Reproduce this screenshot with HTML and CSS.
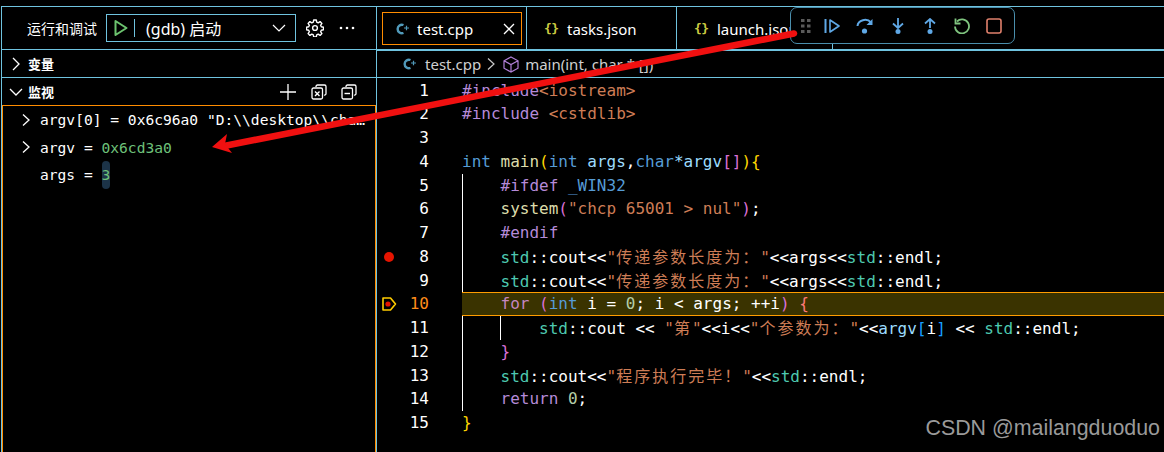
FILE: index.html
```html
<!DOCTYPE html>
<html lang="zh">
<head>
<meta charset="utf-8">
<title>test.cpp</title>
<link rel="stylesheet" href="styles.css">
</head>
<body>
<div class="app">
  <aside class="sidebar">
    <div class="run-bar">
      <span class="run-title">运行和调试</span>
      <div class="run-select">
        <span class="run-play"><svg width="16" height="18" viewBox="0 0 16 18"><path d="M2.5 2 L13.5 9 L2.5 16 Z" fill="none" stroke="#6cc36e" stroke-width="2" stroke-linejoin="round"/></svg></span>
        <span class="run-name">(gdb) 启动</span>
        <svg class="run-caret" width="14" height="8" viewBox="0 0 14 8"><path d="M1 1 L7 7 L13 1" fill="none" stroke="#fff" stroke-width="1.2"/></svg>
      </div>
      <svg class="gear" width="18" height="18" viewBox="0 0 18 18"><path d="M7.7 1 h2.6 l.4 2.2 1.5.7 1.9-1.3 1.8 1.8-1.3 1.9.7 1.5 2.2.4 v2.6 l-2.2.4-.7 1.5 1.3 1.9-1.8 1.8-1.9-1.3-1.5.7-.4 2.2 h-2.6 l-.4-2.2-1.5-.7-1.9 1.3-1.8-1.8 1.3-1.9-.7-1.5-2.2-.4 v-2.6 l2.2-.4.7-1.5-1.3-1.9 1.8-1.8 1.9 1.3 1.5-.7 Z" fill="none" stroke="#fff" stroke-width="1.4" stroke-linejoin="round"/><circle cx="9" cy="9" r="2.4" fill="none" stroke="#fff" stroke-width="1.4"/></svg>
      <svg class="dots" width="16" height="4" viewBox="0 0 16 4"><circle cx="2" cy="2" r="1.3" fill="#fff"/><circle cx="8" cy="2" r="1.3" fill="#fff"/><circle cx="14" cy="2" r="1.3" fill="#fff"/></svg>
    </div>
    <div class="section-head">
      <svg class="chev" width="16" height="16" viewBox="0 0 16 16"><path d="M5 2 L11 8 L5 14" fill="none" stroke="#fff" stroke-width="1.3"/></svg>
      <span>变量</span>
    </div>
    <div class="section-head">
      <svg class="chev" width="16" height="16" viewBox="0 0 16 16"><path d="M2 5 L8 11 L14 5" fill="none" stroke="#fff" stroke-width="1.3"/></svg>
      <span class="grow">监视</span>
      <div class="head-actions">
        <svg width="18" height="18" viewBox="0 0 18 18"><path d="M9 1 V17 M1 9 H17" stroke="#fff" stroke-width="1.3"/></svg>
        <svg width="16" height="16" viewBox="0 0 16 16"><path d="M5 3 V2.500 A1.500 1.500 0 0 1 6.500 1 H13.500 A1.500 1.500 0 0 1 15 2.500 V9.500 A1.500 1.500 0 0 1 13 11" fill="none" stroke="#fff" stroke-width="1.300"/><rect x="1" y="4" width="10.500" height="11" rx="1.500" fill="none" stroke="#fff" stroke-width="1.300"/><path d="M4 7.500 L8.500 12 M8.500 7.500 L4 12" stroke="#fff" stroke-width="1.400"/></svg>
        <svg width="16" height="16" viewBox="0 0 16 16"><path d="M5 3 V2.500 A1.500 1.500 0 0 1 6.500 1 H13.500 A1.500 1.500 0 0 1 15 2.500 V9.500 A1.500 1.500 0 0 1 13 11" fill="none" stroke="#fff" stroke-width="1.300"/><rect x="1" y="4" width="10.500" height="11" rx="1.500" fill="none" stroke="#fff" stroke-width="1.300"/><path d="M3.500 9.500 H9" stroke="#fff" stroke-width="1.400"/></svg>
      </div>
    </div>
    <div class="watch">
      <div class="watch-row"><svg class="tw" width="10" height="14" viewBox="0 0 10 14"><path d="M2 1.500 L8 7 L2 12.500" fill="none" stroke="#fff" stroke-width="1.300"/></svg><span class="watch-text">argv[0] = 0x6c96a0 "D:\\desktop\\char\\test.exe"</span></div>
      <div class="watch-row"><svg class="tw" width="10" height="14" viewBox="0 0 10 14"><path d="M2 1.500 L8 7 L2 12.500" fill="none" stroke="#fff" stroke-width="1.300"/></svg><span class="watch-text">argv = <span class="val">0x6cd3a0</span></span></div>
      <div class="watch-row leaf"><span class="watch-text">args = <span class="val pill">3</span></span></div>
    </div>
  </aside>
  <main class="editor">
    <div class="tabs">
      <div class="tab active"><div class="tab-in"><svg class="cpp-ic" width="14" height="14" viewBox="0 0 14 14"><path d="M8.500 3 A4.300 4.300 0 1 0 8.500 11" fill="none" stroke="#519aba" stroke-width="2.400"/><path d="M9 6 H14 M11.500 3.800 V8.200" stroke="#519aba" stroke-width="1.200"/></svg><span class="tab-name">test.cpp</span><svg class="tab-x" width="12" height="12" viewBox="0 0 12 12"><path d="M1 1 L11 11 M11 1 L1 11" stroke="#fff" stroke-width="1.3"/></svg></div></div>
      <div class="tab"><div class="tab-in"><span class="json-ic">{}</span><span class="tab-name">tasks.json</span></div></div>
      <div class="tab"><div class="tab-in"><span class="json-ic">{}</span><span class="tab-name">launch.json</span></div></div>
    </div>
    <div class="crumbs">
      <svg class="cpp-ic" width="14" height="14" viewBox="0 0 14 14"><path d="M8.500 3 A4.300 4.300 0 1 0 8.500 11" fill="none" stroke="#519aba" stroke-width="2.400"/><path d="M9 6 H14 M11.500 3.800 V8.200" stroke="#519aba" stroke-width="1.200"/></svg><span>test.cpp</span>
      <svg class="crumb-sep" width="10" height="14" viewBox="0 0 10 14"><path d="M2 1.500 L8 7 L2 12.500" fill="none" stroke="#c8c8c8" stroke-width="1.200"/></svg>
      <svg class="crumb-cube" width="16" height="17" viewBox="0 0 16 17"><path d="M8 1 L15 4.800 V12.200 L8 16 L1 12.200 V4.800 Z M1 4.800 L8 8.600 L15 4.800 M8 8.600 V16" fill="none" stroke="#b180d7" stroke-width="1.200"/></svg>
      <span>main(int, char * [])</span>
    </div>
    <div class="code">
      <div class="line"><span class="glyph"></span><span class="num">1</span><span class="src"><span class="pp">#include</span><span class="str">&lt;iostream&gt;</span></span></div>
      <div class="line"><span class="glyph"></span><span class="num">2</span><span class="src"><span class="pp">#include</span> <span class="str">&lt;cstdlib&gt;</span></span></div>
      <div class="line"><span class="glyph"></span><span class="num">3</span><span class="src"></span></div>
      <div class="line"><span class="glyph"></span><span class="num">4</span><span class="src"><span class="kw">int</span> <span class="fn">main</span><span class="b1">(</span><span class="kw">int</span> <span class="var">args</span>,<span class="kw">char</span><span class="var">*argv</span><span class="b2">[]</span><span class="b1">){</span></span></div>
      <div class="line"><span class="glyph"></span><span class="num">5</span><span class="src g1">    <span class="pp">#ifdef</span> <span class="kw">_WIN32</span></span></div>
      <div class="line"><span class="glyph"></span><span class="num">6</span><span class="src g1">    <span class="fn">system</span><span class="b2">(</span><span class="str">"chcp 65001 &gt; nul"</span><span class="b2">)</span>;</span></div>
      <div class="line"><span class="glyph"></span><span class="num">7</span><span class="src g1">    <span class="pp">#endif</span></span></div>
      <div class="line"><span class="glyph"><i class="bp"></i></span><span class="num">8</span><span class="src g1">    <span class="ty">std</span>::cout&lt;&lt;<span class="str">"<span class="cjk">传递参数长度为：</span>"</span>&lt;&lt;args&lt;&lt;<span class="ty">std</span>::endl;</span></div>
      <div class="line"><span class="glyph"></span><span class="num">9</span><span class="src g1">    <span class="ty">std</span>::cout&lt;&lt;<span class="str">"<span class="cjk">传递参数长度为：</span>"</span>&lt;&lt;args&lt;&lt;<span class="ty">std</span>::endl;</span></div>
      <div class="line current"><span class="glyph"><svg width="16" height="16" viewBox="0 0 16 16"><path d="M2 2 H9.500 L14.500 8 L9.500 14 H2 Z" fill="none" stroke="#ffcc00" stroke-width="1.600" stroke-linejoin="round"/><circle cx="7" cy="8" r="2.600" fill="#e51400"/></svg></span><span class="num">10</span><span class="src"><span class="pp">    for</span> <span class="b2">(</span><span class="kw">int</span> i = <span class="lit">0</span>; i &lt; args; ++i<span class="b2">)</span> <span class="b3">{</span></span></div>
      <div class="line"><span class="glyph"></span><span class="num">11</span><span class="src g1 g2">        <span class="ty">std</span>::cout &lt;&lt; <span class="str">"<span class="cjk">第</span>"</span>&lt;&lt;i&lt;&lt;<span class="str">"<span class="cjk">个参数为：</span>"</span>&lt;&lt;<span class="var">argv</span><span class="b4">[</span>i<span class="b4">]</span> &lt;&lt; <span class="ty">std</span>::endl;</span></div>
      <div class="line"><span class="glyph"></span><span class="num">12</span><span class="src g1">    <span class="b2">}</span></span></div>
      <div class="line"><span class="glyph"></span><span class="num">13</span><span class="src g1">    <span class="ty">std</span>::cout&lt;&lt;<span class="str">"<span class="cjk">程序执行完毕！</span>"</span>&lt;&lt;<span class="ty">std</span>::endl;</span></div>
      <div class="line"><span class="glyph"></span><span class="num">14</span><span class="src g1">    <span class="pp">return</span> <span class="lit">0</span>;</span></div>
      <div class="line"><span class="glyph"></span><span class="num">15</span><span class="src"><span class="b1">}</span></span></div>
    </div>
  </main>
</div>

<div class="debug-bar">
  <svg class="grip" width="10" height="14" viewBox="0 0 10 14"><g fill="#5a5a5a"><rect x="0" y="0" width="3.500" height="3"/><rect x="6" y="0" width="3.500" height="3"/><rect x="0" y="5.500" width="3.500" height="3"/><rect x="6" y="5.500" width="3.500" height="3"/><rect x="0" y="11" width="3.500" height="3"/><rect x="6" y="11" width="3.500" height="3"/></g></svg>
  <svg width="16" height="16" viewBox="0 0 16 16"><path d="M1.500 1 V15" stroke="#5fa8e6" stroke-width="2"/><path d="M6 2 L15 8 L6 14 Z" fill="none" stroke="#5fa8e6" stroke-width="1.600" stroke-linejoin="round"/></svg>
  <svg width="18" height="16" viewBox="0 0 18 16"><path d="M1.500 8 A7.500 6.500 0 0 1 15 4.500" fill="none" stroke="#5fa8e6" stroke-width="2"/><path d="M16.500 1 V7 H10.500" fill="#5fa8e6"/><circle cx="8.500" cy="13" r="2.600" fill="#5fa8e6"/></svg>
  <svg width="16" height="16" viewBox="0 0 16 16"><path d="M8 0 V9 M3 5.500 L8 10 L13 5.500" fill="none" stroke="#5fa8e6" stroke-width="1.800"/><circle cx="8" cy="13.400" r="2.500" fill="#5fa8e6"/></svg>
  <svg width="16" height="16" viewBox="0 0 16 16"><path d="M8 10 V1 M3 5.500 L8 1 L13 5.500" fill="none" stroke="#5fa8e6" stroke-width="1.800"/><circle cx="8" cy="13.400" r="2.500" fill="#5fa8e6"/></svg>
  <svg width="16" height="16" viewBox="0 0 16 16"><path d="M3 3.500 A7 7 0 1 1 1 8.500" fill="none" stroke="#7fc47f" stroke-width="1.800"/><path d="M1.500 0.500 V5.500 H6.500" fill="none" stroke="#7fc47f" stroke-width="1.800"/></svg>
  <svg width="16" height="16" viewBox="0 0 16 16"><rect x="1" y="1" width="14" height="14" rx="2" fill="none" stroke="#e0806c" stroke-width="1.600"/></svg>
</div>

<svg class="arrow" width="1164" height="452" viewBox="0 0 1164 452"><path d="M794 33.500 L224 146" stroke="#f01010" stroke-width="6.500" stroke-linecap="round"/><path d="M212 147 L227 134 L225 144 L232 153 Z" fill="#f01010"/></svg>

<div class="watermark">CSDN @mailangduoduo</div>
</body>
</html>
```
FILE: styles.css
```css
* { box-sizing: border-box; }
html, body { margin: 0; padding: 0; background: #000; }
body { width: 1164px; height: 452px; overflow: hidden; position: relative; font-family: "Noto Sans", "Noto Sans CJK SC", sans-serif; color: #fff; }

.app { display: flex; height: 452px; padding-top: 6px; }

.sidebar { width: 376px; flex: none; display: flex; flex-direction: column; border-left: 1px solid #6fc3df; margin-left: 1px; border-right: 1px solid #6fc3df; border-top: 1px solid #6fc3df; }
.run-bar { height: 43px; flex: none; display: flex; align-items: center; padding-left: 25px; border-bottom: 1px solid #6fc3df; }
.run-title { font: 14px "Noto Sans CJK SC", sans-serif; width: 79px; flex: none; }
.run-select { width: 190px; height: 28px; flex: none; border: 1px solid #6fc3df; display: flex; align-items: center; }
.run-play { width: 28px; height: 18px; flex: none; display: flex; align-items: center; justify-content: center; border-right: 1px solid #6fc3df; }
.run-name { flex: 1; padding-left: 11px; font: 16px "Noto Sans", "Noto Sans CJK SC", sans-serif; }
.run-caret { margin-right: 9px; }
.gear { margin-left: 10px; }
.dots { margin-left: 15px; }

.section-head { height: 28px; flex: none; display: flex; align-items: center; gap: 4px; padding-left: 6px; border-bottom: 1px solid #6fc3df; font: bold 13px "Noto Sans CJK SC", sans-serif; }
.section-head + .section-head { border-bottom: 0; height: 27px; }
.grow { flex: 1; }
.head-actions { display: flex; align-items: center; gap: 14px; padding-right: 19px; }

.watch { flex: 1; border: 1px solid #ff8c00; border-width: 1px 1px 0 1px; font: 14.6px "DejaVu Sans Mono", monospace; }
.watch-row { height: 27.5px; display: flex; align-items: center; padding-left: 18px; gap: 9px; white-space: pre; }
.watch-row.leaf { padding-left: 37px; }
.watch-text { overflow: hidden; text-overflow: ellipsis; white-space: pre; max-width: 329px; }
.val { color: #6ec27a; }
.pill { display: inline-block; background: #1c3347; border-radius: 5px; padding: 5px 0; line-height: 18px; }

.editor { flex: 1; min-width: 0; display: flex; flex-direction: column; border-top: 1px solid #6fc3df; }
.tabs { height: 44px; flex: none; display: flex; border-bottom: 2px solid #6fc3df; }
.tab { width: 150px; flex: none; border-right: 1px solid #6fc3df; padding: 5px 4px 4px 5px; }
.tab:last-child { width: 156px; }
.tab-in { height: 100%; display: flex; align-items: center; padding-left: 12px; font: 15px "Noto Sans", sans-serif; white-space: nowrap; }
.active .tab-in { border: 1px solid #ff8c00; }
.tab-name { flex: 1; }
.tab-x { margin-right: 6px; }
.cpp-ic { flex: none; margin-right: 8px; }
.json-ic { color: #cbcb41; font: bold 13px "DejaVu Sans Mono", monospace; width: 23px; flex: none; letter-spacing: -0.5px; }

.crumbs { height: 27px; flex: none; display: flex; align-items: center; padding-left: 25px; border-bottom: 1px solid #6fc3df; font: 15px "Noto Sans", sans-serif; color: #d0d0d0; white-space: nowrap; }
.crumbs .cpp-ic { margin-right: 9px; }
.crumb-sep { margin: 0 7px 0 5px; }
.crumb-cube { margin-right: 6px; }

.code { flex: 1; padding-top: 0.5px; font: 16px/23.75px "DejaVu Sans Mono", "Noto Sans CJK SC", monospace; color: #fff; }
.line { display: flex; height: 23.75px; }
.glyph { width: 24px; flex: none; display: flex; align-items: center; justify-content: center; }
.bp { width: 10px; height: 10px; border-radius: 50%; background: #e51400; display: block; }
.num { width: 28px; flex: none; text-align: right; font-size: 16px; }
.src { margin-left: 33px; flex: 1; white-space: pre; }
.g1 { background: linear-gradient(#fff, #fff) 0 0 / 1px 100% no-repeat; }
.g2 { background: linear-gradient(#fff, #fff) 0 0 / 1px 100% no-repeat, linear-gradient(#fff, #fff) 38px 0 / 1px 100% no-repeat; }
.current .num { color: #ff8c1a; }
.current .src { background: #3a3300; border-top: 1px solid #ff9d00; border-bottom: 1px solid #ff9d00; line-height: 21.75px; }
.current .src .pp { color: #c586c0; }

.pp { color: #b58ad8; }
.kw { color: #569cd6; }
.fn { color: #dcdcaa; }
.var { color: #9cdcfe; }
.ty { color: #4ec9b0; }
.str { color: #ce7d56; }
.lit { color: #b5cea8; }
.b1 { color: #ffd700; }
.b2 { color: #da70d6; }
.b3 { color: #ff7a7a; }
.b4 { color: #179fff; }
.cjk { font-family: "Noto Sans CJK SC", sans-serif; letter-spacing: 2px; }

.debug-bar { position: absolute; left: 790px; top: 7px; width: 225px; height: 37px; background: #000; border: 1px solid #4a8eac; border-radius: 7px; display: flex; align-items: center; gap: 16px; padding-left: 10px; }
.grip { margin-right: -3px; }
.arrow { position: absolute; left: 0; top: 0; pointer-events: none; }
.watermark { position: absolute; right: 4px; top: 416px; font: 21.4px "Liberation Sans", sans-serif; color: #9a9a9a; white-space: nowrap; }
```
